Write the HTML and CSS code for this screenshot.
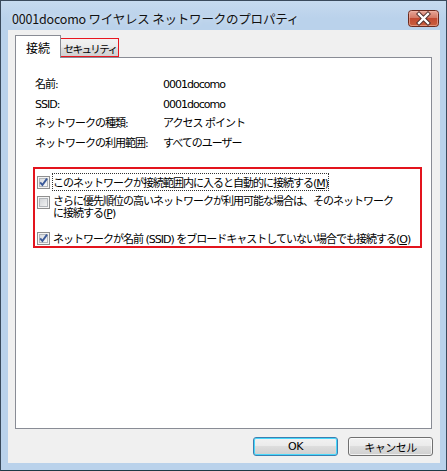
FILE: index.html
```html
<!DOCTYPE html>
<html lang="ja">
<head>
<meta charset="utf-8">
<title>0001docomo ワイヤレス ネットワークのプロパティ</title>
<link rel="stylesheet" href="styles.css">
</head>
<body>
<div class="window">
  <div class="titlebar">
    <div class="title">0001docomo ワイヤレス ネットワークのプロパティ</div>
    <div class="close">
      <svg width="31" height="17" viewBox="0 0 31 17">
        <defs>
          <linearGradient id="cg" x1="0" y1="0" x2="0" y2="1">
            <stop offset="0" stop-color="#e9a99b"/>
            <stop offset="0.45" stop-color="#d47a66"/>
            <stop offset="0.5" stop-color="#c24a32"/>
            <stop offset="1" stop-color="#c9603f"/>
          </linearGradient>
        </defs>
        <rect x="0.5" y="0.5" width="30" height="16" rx="3" fill="url(#cg)" stroke="#6b2a1e"/>
        <rect x="1.5" y="1.5" width="28" height="14" rx="2" fill="none" stroke="#f0b8a8" stroke-opacity="0.6"/>
        <path d="M11 4 L20 13 M20 4 L11 13" stroke="#4a2a28" stroke-width="4.2" stroke-linecap="square"/>
        <path d="M11 4 L20 13 M20 4 L11 13" stroke="#ffffff" stroke-width="2.4" stroke-linecap="square"/>
      </svg>
    </div>
  </div>
  <div class="client">
    <div class="tabs">
      <div class="tab active">接続</div>
      <div class="tab marked">セキュリティ</div>
    </div>
    <div class="panel">
      <div class="info">
        <div class="label">名前:</div><div class="value">0001docomo</div>
        <div class="label">SSID:</div><div class="value">0001docomo</div>
        <div class="label">ネットワークの種類:</div><div class="value">アクセス ポイント</div>
        <div class="label">ネットワークの利用範囲:</div><div class="value">すべてのユーザー</div>
      </div>
      <div class="options">
        <div class="opt opt1">
          <svg class="cb" width="13" height="13" viewBox="0 0 13 13"><defs><linearGradient id="g1" x1="0" y1="0" x2="1" y2="1"><stop offset="0" stop-color="#d6d9dd"/><stop offset="1" stop-color="#fbfbfb"/></linearGradient></defs><rect x="0.5" y="0.5" width="12" height="12" fill="#f4f4f4" stroke="#8f8f8f"/><rect x="2.5" y="2.5" width="8" height="8" fill="url(#g1)" stroke="#b2b6bb"/><path d="M3.2 6.4 L5.4 9 L10 2.6" fill="none" stroke="#3b5a9a" stroke-width="1.9"/></svg>
          <span class="text focus">このネットワークが接続範囲内に入ると自動的に接続する(<u>M</u>)</span>
        </div>
        <div class="opt opt2">
          <svg class="cb" width="13" height="13" viewBox="0 0 13 13"><defs><linearGradient id="g2" x1="0" y1="0" x2="1" y2="1"><stop offset="0" stop-color="#cfd2d6"/><stop offset="1" stop-color="#f3f3f3"/></linearGradient></defs><rect x="0.5" y="0.5" width="12" height="12" fill="#f4f4f4" stroke="#8f8f8f"/><rect x="2.5" y="2.5" width="8" height="8" fill="url(#g2)" stroke="#b2b6bb"/></svg>
          <span class="text">さらに優先順位の高いネットワークが利用可能な場合は、そのネットワーク<br>に接続する(<u>P</u>)</span>
        </div>
        <div class="opt opt3">
          <svg class="cb" width="13" height="13" viewBox="0 0 13 13"><defs><linearGradient id="g3" x1="0" y1="0" x2="1" y2="1"><stop offset="0" stop-color="#d6d9dd"/><stop offset="1" stop-color="#fbfbfb"/></linearGradient></defs><rect x="0.5" y="0.5" width="12" height="12" fill="#f4f4f4" stroke="#8f8f8f"/><rect x="2.5" y="2.5" width="8" height="8" fill="url(#g3)" stroke="#b2b6bb"/><path d="M3.2 6.4 L5.4 9 L10 2.6" fill="none" stroke="#3b5a9a" stroke-width="1.9"/></svg>
          <span class="text">ネットワークが名前 (SSID) をブロードキャストしていない場合でも接続する(<u>O</u>)</span>
        </div>
      </div>
    </div>
    <div class="buttons">
      <button class="btn default">OK</button>
      <button class="btn">キャンセル</button>
    </div>
  </div>
</div>
</body>
</html>
```

FILE: styles.css
```css
html, body {
  margin: 0;
  padding: 0;
  background: #ffffff;
}

.window {
  box-sizing: border-box;
  width: 447px;
  height: 471px;
  border: 1px solid #3a4a5c;
  border-bottom-color: #1d3a46;
  background: #bad2eb;
  display: flex;
  flex-direction: column;
  font-family: "DejaVu Sans", "Noto Sans CJK JP", sans-serif;
  font-size: 11px;
  letter-spacing: -1px;
  color: #000;
}

.titlebar {
  height: 29px;
  box-sizing: border-box;
  padding: 6px 7px 0 11px;
  display: flex;
  align-items: center;
  justify-content: space-between;
  background: linear-gradient(#c6daef, #bad2eb 60%);
}

.title {
  font-family: "Noto Sans CJK JP", sans-serif;
  font-size: 12.5px;
  letter-spacing: -0.2px;
  color: #111;
  text-shadow: 0 0 6px rgba(255,255,255,0.7);
}

.close {
  display: flex;
  width: 31px;
  height: 17px;
}

.client {
  box-sizing: border-box;
  margin: 0 6px 6px 7px;
  height: 433px;
  background: #f0f0f0;
  padding: 5px 7px 7px 7px;
  display: flex;
  flex-direction: column;
}

.tabs {
  height: 22px;
  display: flex;
  align-items: flex-end;
}

.tab {
  box-sizing: border-box;
  border: 1px solid #898c95;
  border-bottom: none;
  display: flex;
  align-items: center;
  justify-content: center;
  font-family: "Noto Sans CJK JP", sans-serif;
  letter-spacing: 0;
  font-size: 12px;
  white-space: nowrap;
}

.tab.active {
  width: 46px;
  height: 23px;
  margin-bottom: -1px;
  background: #fff;
  position: relative;
  z-index: 1;
  padding-top: 1px;
}

.tab.marked {
  width: 59px;
  height: 19px;
  margin-left: -1px;
  border-left: none;
  background: linear-gradient(#f2f2f2, #ebebeb 45%, #dddddd 50%, #cfcfcf);
  outline: 1px solid #e8161f;
  outline-offset: -1px;
  font-size: 10.5px;
  letter-spacing: -1.6px;
  padding: 1px 0 0 2px;
}

.panel {
  box-sizing: border-box;
  height: 372px;
  margin-right: 1px;
  border: 1px solid #898c95;
  background: #fff;
  padding: 17px 0 0 0;
}

.info {
  display: grid;
  grid-template-columns: 128px auto;
  padding-left: 19px;
  line-height: 19.5px;
}

.options {
  box-sizing: border-box;
  margin: 14px 0 0 17px;
  width: 389px;
  height: 81px;
  border: 2px solid #e3141d;
  padding: 3px 0 0 2px;
}

.opt {
  display: flex;
  align-items: flex-start;
  white-space: nowrap;
}

.cb {
  flex: none;
  margin-right: 3px;
}

.opt1 {
  height: 20px;
  align-items: center;
}

.opt2 {
  margin-top: 4px;
  line-height: 12px;
}

.opt3 {
  margin-top: 10px;
  height: 16px;
  align-items: center;
}

.text u {
  text-decoration: underline;
}

.focus {
  outline: 1px dotted #333;
  outline-offset: 0;
}

.buttons {
  margin-top: 8px;
  display: flex;
  justify-content: flex-end;
  gap: 10px;
}

.btn {
  box-sizing: border-box;
  width: 85px;
  height: 19px;
  padding: 0;
  border: 1px solid #707070;
  border-radius: 3px;
  background: linear-gradient(#f2f2f2, #ebebeb 45%, #dddddd 50%, #cfcfcf);
  font-family: "DejaVu Sans", "Noto Sans CJK JP", sans-serif;
  font-size: 11px;
  letter-spacing: -0.5px;
  color: #000;
  box-shadow: inset 0 0 0 1px rgba(255,255,255,0.7);
}

.btn.default {
  border-color: #3c7fb1;
  box-shadow: inset 0 0 0 1px #48d8fb;
}
```
